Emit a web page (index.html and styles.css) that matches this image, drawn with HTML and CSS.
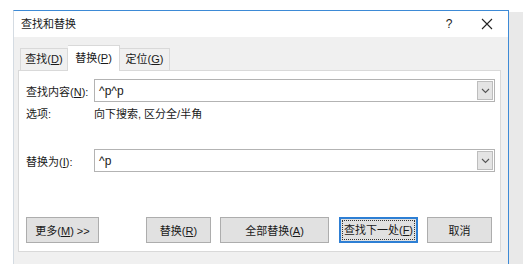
FILE: index.html
```html
<!DOCTYPE html>
<html lang="zh-CN">
  <head>
    <meta charset="UTF-8" />
    <title>查找和替换</title>
    <link rel="stylesheet" href="styles.css">
  </head>
  <body>
    <div class="screen">
      <div class="dialog">
        <div class="titlebar">
          <span class="title">查找和替换</span>
          <span class="help">?</span>
          <span class="close">
            <svg width="12" height="12" viewBox="0 0 12 12">
              <path d="M1 1 L11 11 M11 1 L1 11" stroke="#222" stroke-width="1.1" fill="none" />
            </svg>
          </span>
        </div>

        <div class="body">
          <div class="tabs">
            <div class="tab">查找(<u>D</u>)</div>
            <div class="tab active">替换(<u>P</u>)</div>
            <div class="tab">定位(<u>G</u>)</div>
          </div>

          <div class="panel">
            <div class="row first">
              <label class="label">查找内容(<u>N</u>):</label>
              <div class="combo">
                <span class="combo-text">^p^p</span>
                <span class="drop">
                  <svg width="9" height="6" viewBox="0 0 9 6">
                    <path d="M1 1 L4.5 4.5 L8 1" stroke="#555" stroke-width="1.1" fill="none" />
                  </svg>
                </span>
              </div>
            </div>

            <div class="row options">
              <span class="label">选项:</span>
              <span class="option-text">向下搜索, 区分全/半角</span>
            </div>

            <div class="row replace">
              <label class="label">替换为(<u>I</u>):</label>
              <div class="combo">
                <span class="combo-text">^p</span>
                <span class="drop">
                  <svg width="9" height="6" viewBox="0 0 9 6">
                    <path d="M1 1 L4.5 4.5 L8 1" stroke="#555" stroke-width="1.1" fill="none" />
                  </svg>
                </span>
              </div>
            </div>

            <div class="buttons">
              <button class="btn more">更多(<u>M</u>) &gt;&gt;</button>
              <button class="btn replace-one">替换(<u>R</u>)</button>
              <button class="btn replace-all">全部替换(<u>A</u>)</button>
              <button class="btn find-next"><span class="focus">查找下一处(<u>F</u>)</span></button>
              <button class="btn cancel">取消</button>
            </div>
          </div>
        </div>
      </div>
      <div class="edge"></div>
    </div>
  </body>
</html>
```

FILE: styles.css
```css
body {
  margin: 0;
  font-family: "Liberation Sans", "Noto Sans CJK SC", sans-serif;
  font-size: 11px;
  color: #1a1a1a;
  background: #fff;
  white-space: nowrap;
}

.screen {
  display: flex;
  width: 523px;
  height: 264px;
  overflow: hidden;
}

.dialog {
  margin-top: 10px;
  margin-left: 13px;
  width: 494px;
  border-top: 1px solid #3d8ad6;
  border-right: 1px solid #3d8ad6;
  border-left: 1px solid #d4dbe2;
  display: flex;
  flex-direction: column;
}

.edge {
  flex: 1;
  margin-top: 12px;
  background: #e9e9e9;
}

.titlebar {
  height: 26px;
  display: flex;
  align-items: center;
  background: #fff;
  padding-left: 7px;
}
.title {
  flex: 1;
  line-height: 26px;
}
.help {
  width: 12px;
  font-size: 12px;
  text-align: center;
  margin-right: 26px;
}
.close {
  display: flex;
  margin-right: 15px;
}

.body {
  flex: 1;
  background: #f0f0f0;
  padding: 8px 7px 0 4px;
}

/* Tabs */
.tabs {
  display: flex;
  align-items: flex-end;
  height: 25px;
  padding-left: 2px;
  position: relative;
  z-index: 1;
}
.tab {
  height: 22px;
  line-height: 21px;
  width: 48px;
  text-align: center;
  box-sizing: border-box;
  border: 1px solid #d9d9d9;
  border-bottom: none;
  background: #f0f0f0;
}
.tab.active {
  width: 52px;
  height: 26px;
  line-height: 25px;
  background: #fff;
  margin-bottom: -1px;
  border-left: none;
}
.tab.active + .tab {
  border-left: none;
  width: 50px;
}

/* Panel */
.panel {
  height: 180px;
  background: #fff;
  border: 1px solid #d9d9d9;
  padding: 0 5px 0 7px;
  display: flex;
  flex-direction: column;
}

.row {
  display: flex;
  align-items: center;
}
.row.first {
  margin-top: 8px;
}
.row.options {
  margin-top: 2px;
  height: 18px;
}
.row.replace {
  margin-top: 27px;
}
.label {
  width: 68px;
  flex-shrink: 0;
}

.combo {
  flex: 1;
  height: 23px;
  box-sizing: border-box;
  border: 1px solid #b3b3b3;
  display: flex;
  align-items: center;
  padding: 1px;
}
.combo-text {
  flex: 1;
  padding-left: 3px;
  font-size: 12px;
}
.drop {
  width: 16px;
  height: 19px;
  box-sizing: border-box;
  background: #e4e4e4;
  border: 1px solid #bdbdbd;
  display: flex;
  align-items: center;
  justify-content: center;
}

/* Buttons */
.buttons {
  display: flex;
  margin-top: auto;
  margin-bottom: 8px;
}
.btn {
  height: 26px;
  box-sizing: border-box;
  border: 1px solid #adadad;
  background: #e1e1e1;
  font-family: inherit;
  font-size: 11px;
  color: #1a1a1a;
  padding: 0;
  white-space: nowrap;
}
.btn.more {
  width: 73px;
  margin-right: 47px;
}
.btn.replace-one {
  width: 65px;
  margin-right: 9px;
}
.btn.replace-all {
  width: 109px;
  margin-right: 10px;
}
.btn.find-next {
  width: 79px;
  margin-right: 9px;
  border: 2px solid #2e7fd4;
  display: flex;
  padding: 1px;
}
.btn.find-next .focus {
  flex: 1;
  border: 1px dotted #333;
  line-height: 18px;
  overflow: hidden;
}
.btn.cancel {
  width: 65px;
}
```
